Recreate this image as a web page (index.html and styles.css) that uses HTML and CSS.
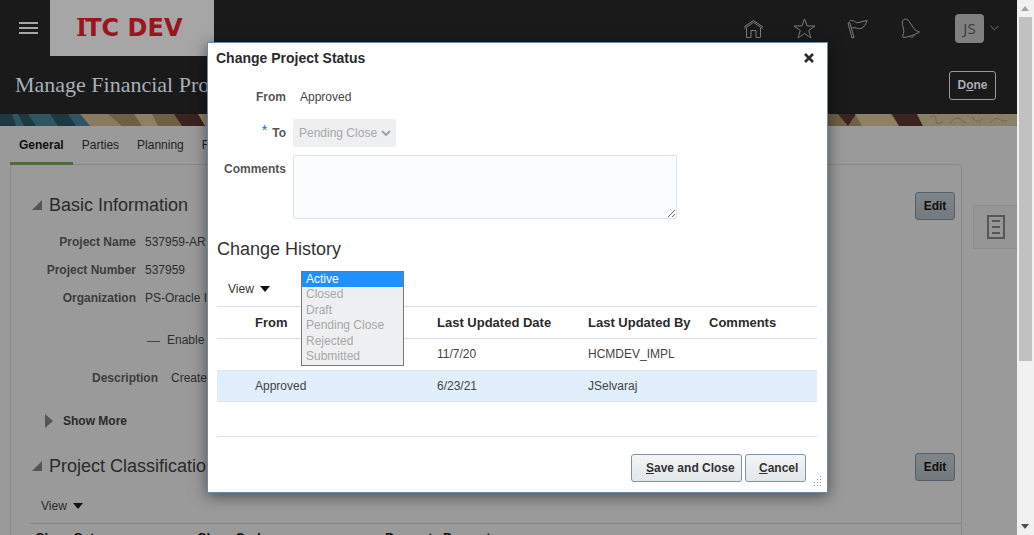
FILE: index.html
```html
<!doctype html>
<html>

<head>
  <meta charset="UTF-8">
  <title>Manage Financial Project</title>
  <link rel="stylesheet" href="styles.css">
</head>

<body>
  <div class="main">
    <div class="topbar">
      <div class="burger"><span></span><span></span><span></span></div>
      <div class="logo"><span class="logo-i">I</span>TC DEV</div>
      <div class="topicons">
        <svg class="ico ico-home" width="21" height="21" viewBox="0 0 21 21">
          <path d="M1 9 10.500 2.500 20 9M1.500 10.500 10.500 4.300 19.500 10.500M3.500 10V19.500H8V12.500H13V19.500H17.500V10" />
        </svg>
        <svg class="ico" width="23" height="21" viewBox="0 0 23 21">
          <path d="M11.500 1 14.200 8H22L15.700 12.500 18 20 11.500 15.500 5 20 7.300 12.500 1 8H8.800Z" />
        </svg>
        <svg class="ico ico-flag" width="21" height="21" viewBox="0 0 21 21">
          <path d="M1 5 2.800 4.500 7 19.500 5 20ZM2.500 3C6 1 9 5.500 12 4.500 15 3.500 17 3 20 2.500 19 6 17 9.500 14 10.500 11 11.500 8 8.500 4.300 10" />
        </svg>
        <svg class="ico ico-bell" width="20" height="21" viewBox="0 0 20 21">
          <path d="M3 1.500C5 .5 7 1.500 8 3.500L13 10.500C14 12.500 16 13 18.500 14 16 15.500 10 18.500 3 19.500 1 19.500 1.500 17.500 2.500 15.500 3.500 12.500 2 9.500 1.500 6.500 1 4.500 1.500 2.500 3 1.500ZM9 18C10 20 12 20 13.500 16.500" />
        </svg>
        <div class="avatar">JS</div>
        <svg class="ico chev" width="9" height="6" viewBox="0 0 10 6">
          <path d="M.5.500 5 5 9.500.500" />
        </svg>
      </div>
    </div>

    <div class="titlebar">
      <h1>Manage Financial Project</h1>
      <div class="btn-done">D<u>o</u>ne</div>
    </div>

    <svg class="banner" width="1017" height="12" viewBox="0 0 1017 12">
      <rect width="1017" height="12" fill="#6f5f44" />
      <rect width="88" height="12" fill="#1e3842" />
      <polygon points="12,0 18,0 24,12 16,12" fill="#2f5462" />
      <polygon points="28,0 50,0 58,12 36,12" fill="#2f5462" />
      <polygon points="68,0 80,0 90,12 76,12" fill="#2f5462" />
      <polygon points="80,0 108,0 122,12 90,12" fill="#8a7a5e" />
      <polygon points="134,0 152,0 158,12 142,12" fill="#8f8065" />
      <polygon points="174,0 204,0 208,12 182,12" fill="#3c2220" />
      <polygon points="198,0 214,0 214,12 205,12" fill="#8f8065" />
      <polygon points="838,0 856,0 848,12" fill="#3c2220" />
      <polygon points="855,0 890,0 900,12 862,12" fill="#8f8065" />
      <polygon points="892,0 917,0 923,12 899,12" fill="#3c2220" />
      <polygon points="917,0 1017,0 1017,12 923,12" fill="#8a8068" />
      <path d="M930 4q6-5 6 2t7 1M950 10q5-9 10-5t6 4M972 3q6 8 10 2M990 9q6-7 9-4t8 2" fill="none" stroke="#6f664e" />
    </svg>

    <div class="tabs">
      <div class="tab tab-on">General</div>
      <div class="tab">Parties</div>
      <div class="tab">Planning</div>
      <div class="tab">Financials</div>
    </div>

    <div class="content">
      <div class="panel">
        <div class="sec-head">
          <h2><i class="tri-open"></i>Basic Information</h2>
          <div class="btn-edit">Edit</div>
        </div>

        <div class="fields">
          <div class="field"><label>Project Name</label><span>537959-AR</span></div>
          <div class="field"><label>Project Number</label><span>537959</span></div>
          <div class="field"><label>Organization</label><span>PS-Oracle I</span></div>
          <div class="field field-check"><label></label><span><i class="dash"></i>Enable</span></div>
          <div class="field field-wide"><label>Description</label><span>Create</span></div>
        </div>

        <div class="more"><i class="tri-closed"></i>Show More</div>

        <div class="sec-head sec-two">
          <h2><i class="tri-open"></i>Project Classification</h2>
          <div class="btn-edit">Edit</div>
        </div>

        <div class="viewbar viewbar-page">View<i class="tri-down"></i></div>

        <div class="class-head">
          <span>Class Category</span>
          <span>Class Code</span>
          <span>Percent</span>
          <span>Percent</span>
        </div>
      </div>

      <div class="sidetab">
        <svg width="18" height="24" viewBox="0 0 18 24">
          <path d="M1 1H17V23H1ZM5 6H13M5 12H13M5 18H13" fill="none" stroke="#565656" stroke-width="2" />
        </svg>
      </div>
    </div>
  </div>

  <div class="scrollbar">
    <i class="arrow-up"></i>
    <div class="thumb"></div>
    <i class="arrow-dn"></i>
  </div>

  <div class="dialog">
    <div class="dlg-title">
      <span>Change Project Status</span>
      <svg width="12" height="12" viewBox="0 0 12 12">
        <path d="M2 2 10 10M10 2 2 10" stroke="#2b2b2b" stroke-width="2.600" />
      </svg>
    </div>

    <div class="dlg-form">
      <label>From</label>
      <div class="dlg-value">Approved</div>
      <label><b class="req">*</b>To</label>
      <div class="dlg-select">Pending Close
        <svg width="10" height="6" viewBox="0 0 10 6">
          <path d="M1 1 5 5 9 1" fill="none" stroke="#a3a3a3" stroke-width="2" />
        </svg>
      </div>
      <label class="label-top">Comments</label>
      <textarea class="dlg-text"></textarea>
    </div>

    <h3>Change History</h3>

    <div class="viewbar">View<i class="tri-down"></i></div>

    <table class="history">
      <tr>
        <th class="col-a">From</th>
        <th class="col-b">Last Updated Date</th>
        <th class="col-c">Last Updated By</th>
        <th class="col-d">Comments</th>
      </tr>
      <tr>
        <td></td>
        <td>11/7/20</td>
        <td>HCMDEV_IMPL</td>
        <td></td>
      </tr>
      <tr class="row-on">
        <td>Approved</td>
        <td>6/23/21</td>
        <td>JSelvaraj</td>
        <td></td>
      </tr>
    </table>

    <div class="dlg-foot">
      <div class="btn btn-save"><u>S</u>ave and Close</div>
      <div class="btn btn-cancel"><u>C</u>ancel</div>
    </div>

    <ul class="listbox">
      <li class="opt-on">Active</li>
      <li>Closed</li>
      <li>Draft</li>
      <li>Pending Close</li>
      <li>Rejected</li>
      <li>Submitted</li>
    </ul>

    <svg class="grip" width="10" height="10" viewBox="0 0 10 10">
      <path d="M8 0h1v1H8zM8 3h1v1H8zM5 3h1v1H5zM8 6h1v1H8zM5 6h1v1H5zM2 6h1v1H2zM8 9h1v1H8zM5 9h1v1H5zM2 9h1v1H2z" fill="#8b98a3" />
    </svg>
  </div>
</body>

</html>
```

FILE: styles.css
```css
html,
body {
  height: 100%;
}

body {
  margin: 0;
  display: flex;
  height: 535px;
  overflow: hidden;
  position: relative;
  font: normal 12px/1.2 "Liberation Sans", Arial, sans-serif;
  color: #2e2e2e;
  background: #9a9a9a;
}

.main {
  flex: 1;
  min-width: 0;
  height: 535px;
  overflow: hidden;
}

/* top bar */
.topbar {
  display: flex;
  align-items: center;
  height: 56px;
  background: #1a1a1a;
}

.burger {
  width: 31px;
  padding-left: 19px;
  display: flex;
  flex-direction: column;
  gap: 3px;
}

.burger span {
  width: 19px;
  height: 2px;
  background: #a6a6a6;
}

.logo {
  width: 164px;
  height: 56px;
  box-sizing: border-box;
  padding-left: 26px;
  background: #a6a6a6;
  font: bold 24px/56px "DejaVu Sans", sans-serif;
  color: #9c141e;
}

.logo-i {
  margin-right: -2px;
  font-family: "DejaVu Serif", serif;
}

.topicons {
  flex: 1;
  display: flex;
  align-items: center;
  padding-left: 529px;
}

.ico {
  fill: none;
  stroke: #7c7c7c;
  stroke-width: 1;
  margin-right: 31px;
}

.ico-home {
  margin-right: 29px;
}

.ico-flag {
  margin-right: 33px;
}

.ico-bell {
  margin-right: 34px;
}

.avatar {
  width: 29px;
  height: 29px;
  background: #808080;
  border-radius: 4px;
  color: #3b3b3b;
  font: 15px/29px "Open Sans", sans-serif;
  text-align: center;
}

.chev {
  margin: 0 0 0 6px;
}

/* title bar */
.titlebar {
  display: flex;
  align-items: center;
  justify-content: space-between;
  height: 58px;
  padding: 0 21px 0 15px;
  background: #1a1a1a;
}

h1 {
  margin: 0;
  font: normal 22px "Liberation Serif", serif;
  color: #a8b0b8;
}

.btn-done {
  width: 45px;
  height: 27px;
  border: 1px solid #9a9a9a;
  border-radius: 3px;
  font-weight: bold;
  line-height: 27px;
  text-align: center;
  color: #a9adb8;
}

.banner {
  display: block;
}

/* tabs */
.tabs {
  display: flex;
  height: 38px;
  padding-left: 10px;
  position: relative;
}

.tab {
  padding: 0 9px;
  line-height: 38px;
  color: #222;
}

.tab-on {
  height: 36px;
  border-bottom: 3px solid #4e6b3d;
  font-weight: bold;
  color: #111;
}

/* page content */
.content {
  display: flex;
  padding-left: 10px;
}

.panel {
  width: 950px;
  height: 400px;
  padding-top: 27px;
  border: 1px solid #858a8e;
  border-radius: 3px 3px 0 0;
}

.sec-head {
  display: flex;
  align-items: center;
  justify-content: space-between;
  height: 28px;
  padding: 0 6px 0 21px;
}

.sec-two {
  margin-top: 18px;
}

h2 {
  margin: 0 0 2px;
  display: flex;
  align-items: center;
  font: normal 18px "Liberation Sans", sans-serif;
  color: #2a2a2a;
}

.tri-open {
  width: 0;
  height: 0;
  margin-right: 7px;
  border-left: 10px solid transparent;
  border-bottom: 10px solid #555;
}

.btn-edit {
  width: 38px;
  height: 26px;
  border: 1px solid #53606c;
  border-radius: 3px;
  background: linear-gradient(#80858a, #74797e);
  font-weight: bold;
  line-height: 26px;
  text-align: center;
  color: #0f0f0f;
}

.fields {
  margin-top: 8px;
}

.field {
  display: grid;
  grid-template-columns: 125px 1fr;
  column-gap: 9px;
  align-items: center;
  height: 28px;
}

.field label {
  font-weight: bold;
  text-align: right;
  color: #3d3d3d;
}

.field-check {
  margin-top: 14px;
}

.field-wide {
  grid-template-columns: 147px 1fr;
  column-gap: 13px;
  margin-top: 10px;
}

.dash {
  display: inline-block;
  width: 13px;
  height: 1px;
  margin: 0 7px 5px 2px;
  vertical-align: bottom;
  background: #444;
}

.more {
  display: flex;
  align-items: center;
  height: 28px;
  margin-top: 15px;
  padding-left: 34px;
  font-weight: bold;
  color: #2a2a2a;
}

.tri-closed {
  width: 0;
  height: 0;
  margin-right: 10px;
  border-top: 7px solid transparent;
  border-bottom: 7px solid transparent;
  border-left: 8px solid #555;
}

.viewbar {
  display: flex;
  align-items: center;
  height: 28px;
  margin: 14px 0 3px;
  padding-left: 11px;
  color: #333;
}

.viewbar-page {
  margin: 11px 0 3px;
  padding-left: 30px;
  color: #2a2a2a;
}

.tri-down {
  width: 0;
  height: 0;
  margin-left: 6px;
  border-left: 5px solid transparent;
  border-right: 5px solid transparent;
  border-top: 6px solid #111;
}

.class-head {
  display: grid;
  grid-template-columns: 162px 188px 58px 1fr;
  margin-left: 19px;
  padding: 6px 0 0 5px;
  border-top: 1px solid #848484;
  font-size: 13px;
  font-weight: bold;
  color: #111;
}

.sidetab {
  display: flex;
  align-items: center;
  justify-content: center;
  width: 44px;
  height: 44px;
  margin: 41px 0 0 11px;
  box-sizing: border-box;
  border: 1px solid #8c8c8c;
  border-right: 0;
  background: #969696;
}

/* fake scrollbar */
.scrollbar {
  width: 17px;
  height: 535px;
  position: relative;
  background: #f1f1f1;
}

.thumb {
  width: 13px;
  height: 344px;
  margin: 17px 0 0 2px;
  background: #c1c1c1;
}

.arrow-up,
.arrow-dn {
  position: absolute;
  left: 4px;
  width: 0;
  height: 0;
  border-left: 4px solid transparent;
  border-right: 4px solid transparent;
}

.arrow-up {
  top: 6px;
  border-bottom: 5px solid #a3a3a3;
}

.arrow-dn {
  bottom: 6px;
  border-top: 5px solid #505050;
}

/* dialog */
.dialog {
  position: absolute;
  left: 207px;
  top: 42px;
  width: 619px;
  height: 449px;
  border: 1px solid #6d8aa3;
  background: #fff;
  box-shadow: 0 3px 14px rgba(0, 0, 0, .5);
}

.dlg-title {
  display: flex;
  align-items: center;
  justify-content: space-between;
  height: 30px;
  padding: 0 12px 0 8px;
  font-size: 14px;
  font-weight: bold;
  color: #2b2b2b;
}

.dlg-form {
  display: grid;
  grid-template-columns: 78px 1fr;
  column-gap: 7px;
  row-gap: 8px;
  align-items: center;
  margin-top: 10px;
}

.dlg-form label {
  font-weight: bold;
  text-align: right;
  color: #555;
}

.dlg-form .label-top {
  align-self: start;
  padding-top: 7px;
}

.req {
  margin-right: 5px;
  font-size: 14px;
  font-weight: normal;
  line-height: 0;
  vertical-align: 2px;
  color: #0572ce;
}

.dlg-value {
  height: 28px;
  padding-left: 7px;
  line-height: 28px;
  color: #444;
}

.dlg-select {
  display: flex;
  align-items: center;
  justify-content: space-between;
  width: 103px;
  height: 28px;
  box-sizing: border-box;
  padding: 0 5px 0 6px;
  border-radius: 2px;
  background: #eeeff0;
  color: #a8a8a8;
}

.dlg-text {
  display: block;
  width: 384px;
  height: 64px;
  box-sizing: border-box;
  border: 1px solid #dde3e8;
  border-radius: 2px;
  background: #fbfcfd;
}

h3 {
  margin: 18px 0 0 9px;
  height: 24px;
  font: normal 18px/24px "Liberation Sans", sans-serif;
  color: #333;
}

.dialog .viewbar {
  margin-left: 9px;
}

.history {
  width: 600px;
  margin-left: 9px;
  table-layout: fixed;
  border-collapse: collapse;
  border-top: 1px solid #d9e1e8;
}

.history th {
  height: 31px;
  padding: 0 0 0 8px;
  border-bottom: 1px solid #d9e1e8;
  font-size: 13px;
  text-align: left;
  color: #2b2b2b;
}

.history td {
  height: 31px;
  padding: 0 0 0 8px;
  border-bottom: 1px solid #dfe3e6;
  color: #444;
}

.history .row-on td {
  height: 30px;
}

.history .col-a,
.history tr td:first-child {
  padding-left: 38px;
}

.col-a {
  width: 174px;
}

.col-b {
  width: 143px;
}

.col-c {
  width: 113px;
}

.row-on td {
  background: #e1eefb;
}

.dlg-foot {
  display: flex;
  justify-content: flex-end;
  gap: 3px;
  margin: 34px 10px 0 9px;
  padding: 17px 11px 0 0;
  border-top: 1px solid #d9e1e8;
}

.btn {
  height: 26px;
  border: 1px solid #7d93a8;
  border-radius: 3px;
  background: linear-gradient(#f3f5f6, #e3e7ea);
  font-weight: bold;
  line-height: 26px;
  color: #333;
}

.btn-save {
  width: 95px;
  padding-left: 14px;
}

.btn-cancel {
  width: 46px;
  padding-left: 13px;
}

.listbox {
  position: absolute;
  left: 93px;
  top: 228px;
  width: 101px;
  margin: 0;
  padding: 0 0 1px;
  list-style: none;
  border: 1px solid #777;
  background: #eeeff0;
  color: #a8a8a8;
}

.listbox li {
  height: 15.400px;
  padding-left: 4px;
  line-height: 15.400px;
}

.listbox .opt-on {
  background: #1e90ff;
  color: #fff;
}

.grip {
  position: absolute;
  right: 5px;
  bottom: 6px;
}
```
